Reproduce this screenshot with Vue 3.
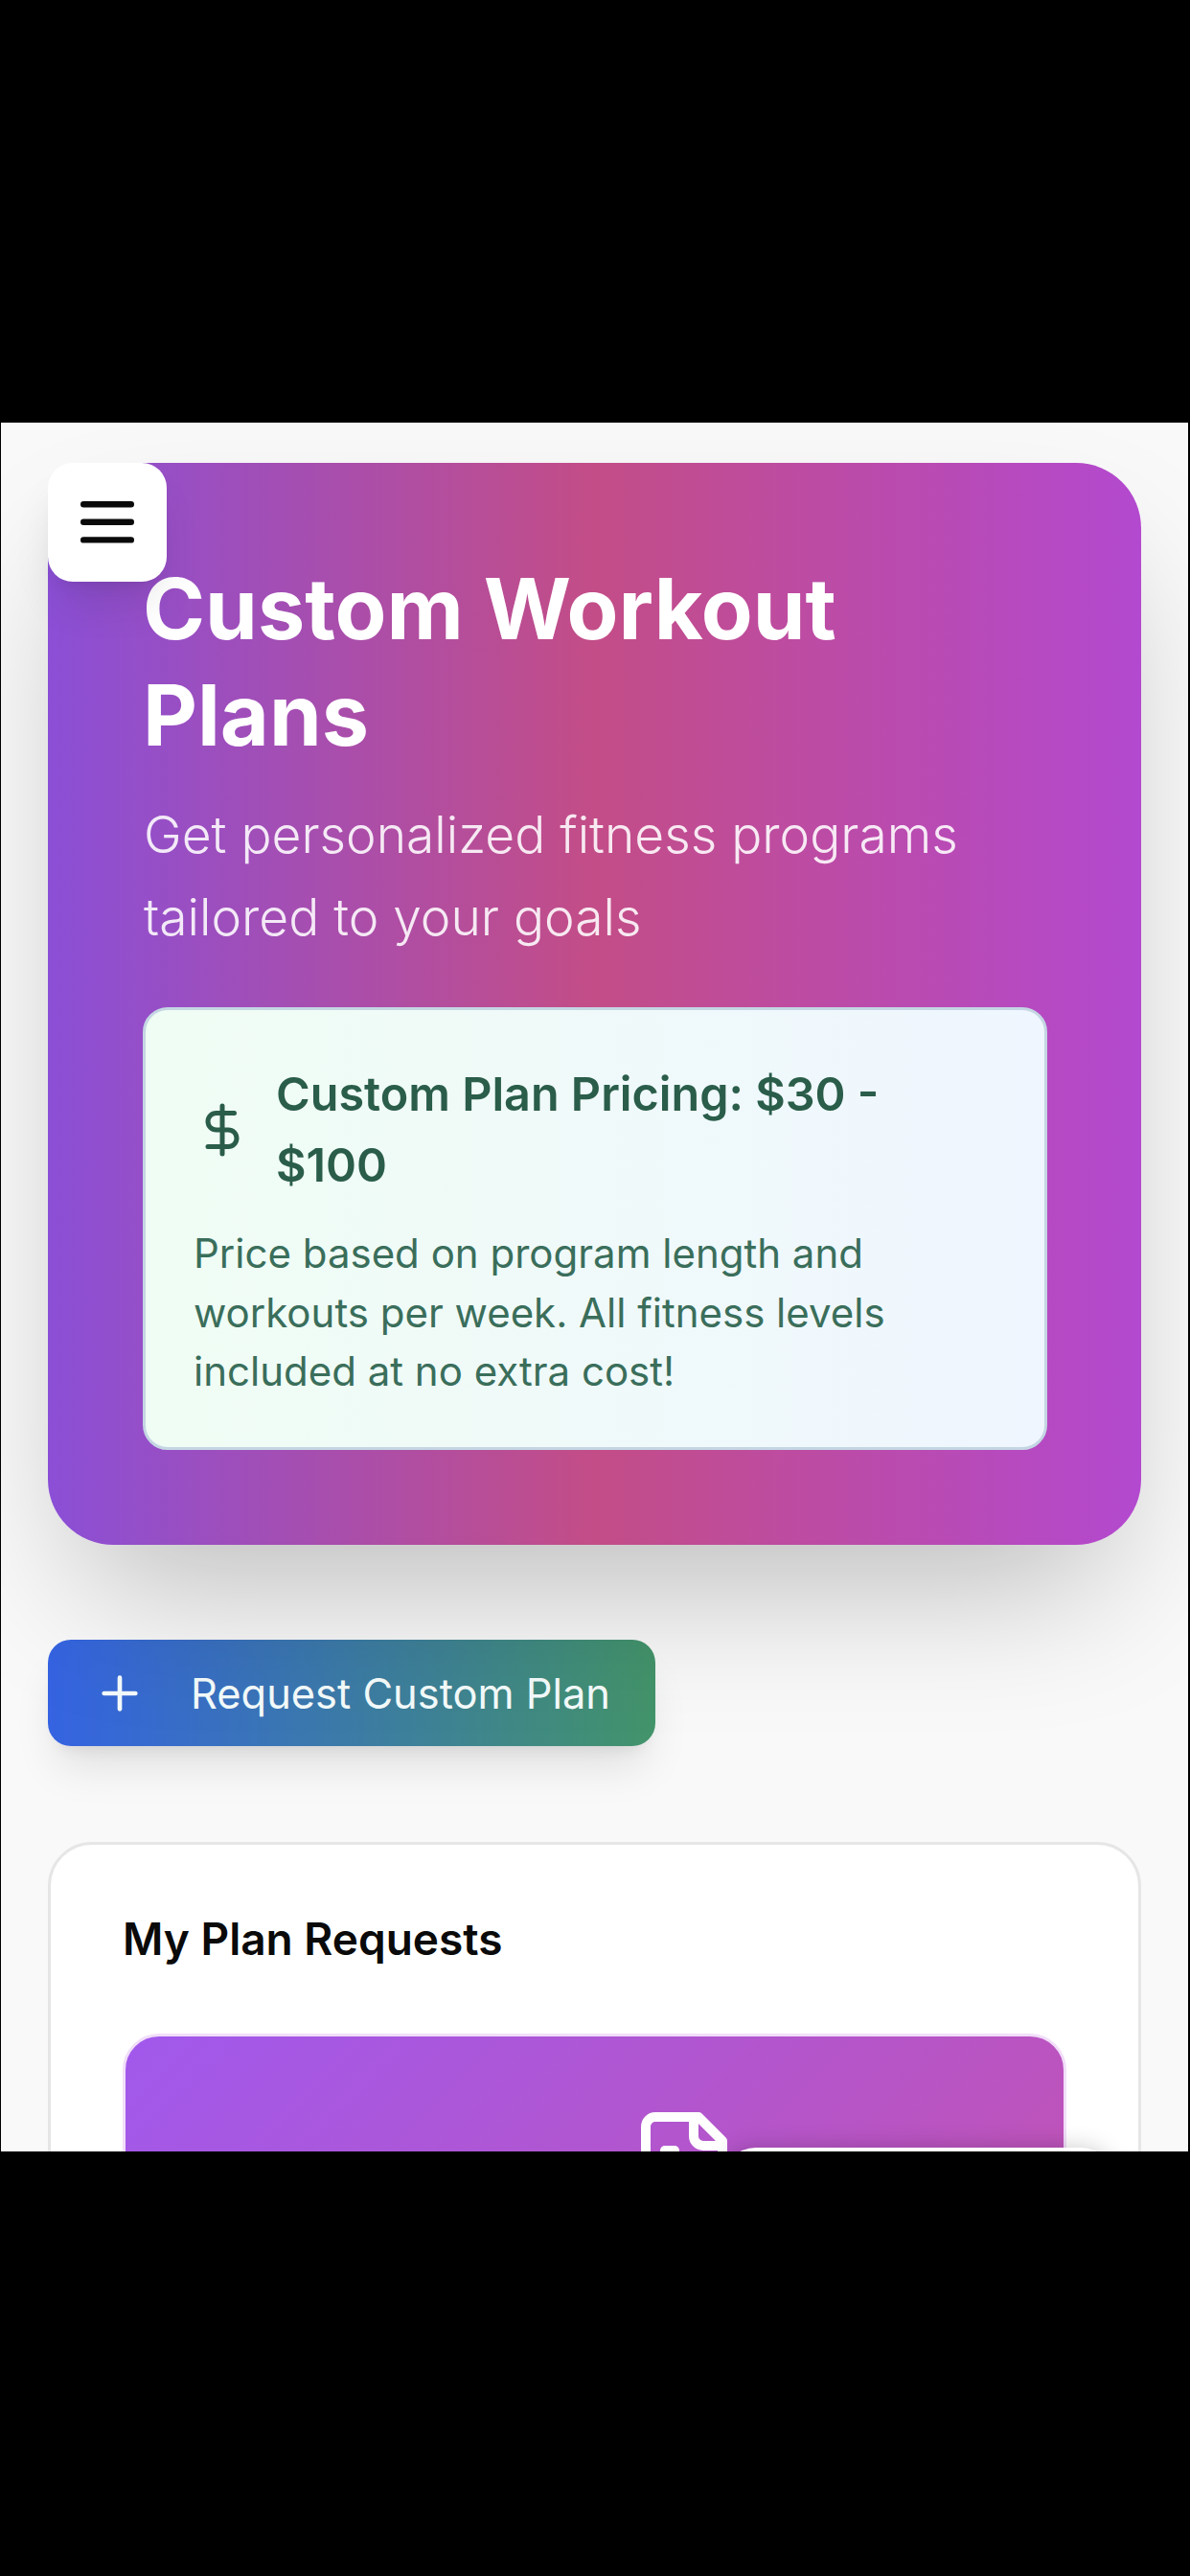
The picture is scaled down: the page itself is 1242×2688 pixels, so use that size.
<script setup>
const priceText = 'Price based on program length and workouts per week. All fitness levels included at no extra cost!'
</script>

<template>
  <div class="device">
    <div class="bezel-top"></div>
    <main class="screen">
      <section class="hero">
        <button class="menu-btn" aria-label="Menu">
          <svg width="56" height="44" viewBox="0 0 56 44" fill="none" stroke="#0a0a0a" stroke-width="6.4" stroke-linecap="round">
            <path d="M3.2 3.2H52.8M3.2 21.8H52.8M3.2 40.4H52.8" />
          </svg>
        </button>
        <h1 class="hero-title">Custom Workout Plans</h1>
        <p class="hero-sub">Get personalized fitness programs tailored to your goals</p>
        <div class="price-card">
          <div class="price-head">
            <svg class="price-icon" width="60" height="60" viewBox="0 0 24 24" fill="none" stroke="currentColor" stroke-width="2" stroke-linecap="round" stroke-linejoin="round">
              <line x1="12" x2="12" y1="2" y2="22" />
              <path d="M17 5H9.5a3.5 3.5 0 0 0 0 7h5a3.5 3.5 0 0 1 0 7H6" />
            </svg>
            <h2 class="price-title">Custom Plan Pricing: $30 - $100</h2>
          </div>
          <p class="price-text">{{ priceText }}</p>
        </div>
      </section>

      <div class="actions">
        <button class="request-btn">
          <svg width="56" height="56" viewBox="0 0 24 24" fill="none" stroke="currentColor" stroke-width="2" stroke-linecap="round" stroke-linejoin="round">
            <path d="M5 12h14" />
            <path d="M12 5v14" />
          </svg>
          <span>Request Custom Plan</span>
        </button>
      </div>

      <section class="requests">
        <h2 class="requests-title">My Plan Requests</h2>
        <div class="empty-card">
          <svg width="120" height="120" viewBox="0 0 24 24" fill="none" stroke="#fff" stroke-width="2" stroke-linecap="round" stroke-linejoin="round">
            <path d="M15 2H6a2 2 0 0 0-2 2v16a2 2 0 0 0 2 2h12a2 2 0 0 0 2-2V7Z" />
            <path d="M14 2v4a2 2 0 0 0 2 2h4" />
            <path d="M10 9H8" />
            <path d="M16 13H8" />
            <path d="M16 17H8" />
          </svg>
        </div>
      </section>

      <div class="toast"></div>
    </main>
    <div class="bezel-bottom"></div>
  </div>
</template>

<style>
html, body { margin: 0; background: #000; }
</style>

<style scoped>
.device {
  width: 1242px;
  height: 2688px;
  background: #000;
  display: flex;
  flex-direction: column;
  overflow: hidden;
  font-family: Inter, "Liberation Sans", sans-serif;
}
.bezel-top { height: 441px; flex: none; }
.bezel-bottom { flex: 1; }
.screen {
  position: relative;
  height: 1804px;
  flex: none;
  margin: 0 2px 0 1px;
  padding: 42px 49px 0;
  box-sizing: border-box;
  overflow: hidden;
  background: #f9f9f9;
}
.hero {
  position: relative;
  box-sizing: border-box;
  height: 1129px;
  padding: 97px 98px 0 99px;
  border-radius: 68px;
  background: linear-gradient(90deg, #8b4fd6 0%, #c34d87 50%, #b349cf 100%);
  box-shadow: 0 75px 150px -36px rgba(0, 0, 0, 0.25);
  color: #fff;
}
.menu-btn {
  position: absolute;
  left: 0;
  top: 0;
  width: 124px;
  height: 124px;
  padding: 0;
  display: flex;
  align-items: center;
  justify-content: center;
  border: 0;
  border-radius: 26px;
  background: #fff;
  box-shadow: 0 30px 45px -9px rgba(0, 0, 0, 0.1), 0 12px 18px -12px rgba(0, 0, 0, 0.1);
}
.hero-title {
  margin: 0;
  font-size: 88px;
  line-height: 111px;
  font-weight: 700;
}
.hero-sub {
  margin: 26px 0 0 1px;
  font-size: 53.3px;
  line-height: 86px;
  font-weight: 350;
  color: rgba(255, 255, 255, 0.88);
}
.price-card {
  box-sizing: border-box;
  height: 462px;
  margin-top: 51px;
  padding: 51px 50px 0 50px;
  border: 3px solid #c4d6e3;
  border-radius: 26px;
  background: linear-gradient(90deg, #f0fdf4 0%, #eff6ff 100%);
}
.price-head {
  display: flex;
  align-items: center;
  gap: 26px;
}
.price-icon { flex: none; color: #2a5d4a; }
.price-title {
  margin: 0;
  font-size: 48.5px;
  line-height: 74px;
  font-weight: 600;
  color: #2a5d4a;
}
.price-text {
  margin: 24px 0 0;
  font-size: 42px;
  line-height: 61.5px;
  color: #3a6e5b;
}
.actions {
  display: flex;
  margin-top: 99px;
}
.request-btn {
  width: 634px;
  height: 111px;
  padding: 0 0 0 47px;
  display: flex;
  align-items: center;
  gap: 46px;
  border: 0;
  border-radius: 24px;
  background: linear-gradient(90deg, #3563e2 0%, #43946a 100%);
  box-shadow: 0 30px 45px -9px rgba(0, 0, 0, 0.1), 0 12px 18px -12px rgba(0, 0, 0, 0.1);
  color: #f4fbfb;
  font: 400 43.4px Inter, "Liberation Sans", sans-serif;
}
.requests {
  box-sizing: border-box;
  height: 700px;
  margin-top: 100px;
  padding: 69px 75px 0;
  border: 3px solid #e6e6e6;
  border-radius: 46px;
  background: #fff;
}
.requests-title {
  margin: 0;
  font-size: 46px;
  line-height: 58px;
  font-weight: 600;
  color: #0a0a0a;
}
.empty-card {
  box-sizing: border-box;
  height: 400px;
  margin-top: 70px;
  padding: 74px 336px 0 0;
  display: flex;
  justify-content: flex-end;
  align-items: flex-start;
  border: 3px solid #f1def9;
  border-radius: 38px;
  background: linear-gradient(135deg, #a159ec 0%, #c552ae 100%);
}
.toast {
  position: absolute;
  left: 752px;
  top: 1800px;
  width: 411px;
  height: 120px;
  border-radius: 36px;
  background: #fff;
  box-shadow: 0 0 24px rgba(0, 0, 0, 0.2);
}
</style>
